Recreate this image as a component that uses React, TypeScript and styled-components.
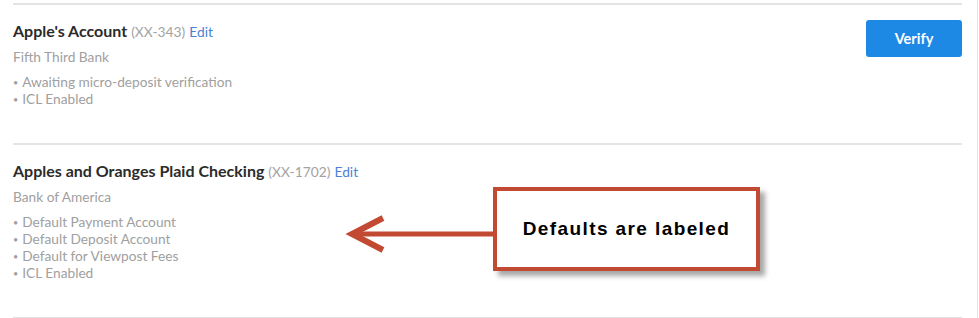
import styled, { createGlobalStyle } from 'styled-components'

const GlobalStyle = createGlobalStyle`
  html, body {
    margin: 0;
    padding: 0;
    background: #ffffff;
  }
  body {
    font-family: Lato, 'Open Sans', Arial, sans-serif;
  }
`

const Frame = styled.div`
  width: 978px;
  height: 318px;
  box-sizing: border-box;
  border-right: 1px solid #e4e4e4;
  padding: 3px 0 0 13px;
  overflow: hidden;
`

const AccountList = styled.div`
  width: 949px;
  border-bottom: 1px solid #e2e2e2;
`

const AccountRow = styled.section`
  position: relative;
  display: flex;
  justify-content: space-between;
  align-items: flex-start;
  border-top: 2px solid #e4e4e4;
  padding: 16px 0 36px;
`

const AccountInfo = styled.div`
  display: flex;
  flex-direction: column;
`

const Title = styled.h3`
  margin: 0;
  font-size: 16px;
  font-weight: 700;
  color: #2b2b2b;
  line-height: 20px;

  span {
    font-weight: 400;
    font-size: 13.8px;
    color: #a3a3a3;
    margin-left: 4px;
  }

  a {
    font-weight: 400;
    font-size: 13.8px;
    color: #4a82d6;
    margin-left: 4px;
    text-decoration: none;
  }
`

const BankName = styled.div`
  margin-top: 7px;
  font-size: 13.7px;
  color: #a0a0a0;
  line-height: 16px;
`

const Notes = styled.ul`
  list-style: none;
  margin: 8px 0 0;
  padding: 0;

  li {
    font-size: 13.7px;
    color: #a0a0a0;
    line-height: 17px;
    height: 17px;

    &::before {
      content: '•';
      display: inline-block;
      font-size: 9px;
      line-height: 0;
      margin-right: 4px;
      transform: translateY(-1px);
    }
  }
`

const VerifyButton = styled.button`
  width: 96px;
  height: 37px;
  margin-top: -1px;
  border: none;
  border-radius: 3px;
  background: #1e88e5;
  color: #ffffff;
  font-family: Lato, Arial, sans-serif;
  font-weight: 700;
  font-size: 14.5px;
  cursor: pointer;
`

const Annotation = styled.div`
  position: absolute;
  left: 332px;
  top: 42px;
  display: flex;
  align-items: flex-start;

  svg {
    margin-top: 27px;
  }
`

const Callout = styled.div`
  width: 259px;
  height: 76px;
  border: 4px solid #c24a33;
  background: #ffffff;
  box-shadow: 5px 5px 5px rgba(0, 0, 0, 0.35);
  display: flex;
  align-items: center;
  justify-content: center;
  font-family: 'Liberation Sans', Arial, sans-serif;
  font-weight: 700;
  font-size: 19px;
  letter-spacing: 1.4px;
  color: #000000;
`

type Account = {
  name: string
  mask: string
  bank: string
  notes: string[]
  verify?: boolean
}

const accounts: Account[] = [
  {
    name: "Apple's Account",
    mask: 'XX-343',
    bank: 'Fifth Third Bank',
    notes: ['Awaiting micro-deposit verification', 'ICL Enabled'],
    verify: true,
  },
  {
    name: 'Apples and Oranges Plaid Checking',
    mask: 'XX-1702',
    bank: 'Bank of America',
    notes: ['Default Payment Account', 'Default Deposit Account', 'Default for Viewpost Fees', 'ICL Enabled'],
  },
]

const Arrow = () => (
  <svg width="148" height="40" viewBox="0 0 148 40">
    <line x1="6" y1="20" x2="148" y2="20" stroke="#c24a33" strokeWidth="5" />
    <polyline points="38,4 7,20 38,36" fill="none" stroke="#c24a33" strokeWidth="6" />
  </svg>
)

export default function App() {
  return (
    <>
      <GlobalStyle />
      <Frame>
        <AccountList>
          {accounts.map((acct, i) => (
            <AccountRow key={acct.mask}>
              <AccountInfo>
                <Title>
                  {acct.name}
                  <span>({acct.mask})</span>
                  <a href="#">Edit</a>
                </Title>
                <BankName>{acct.bank}</BankName>
                <Notes>
                  {acct.notes.map((n) => (
                    <li key={n}>{n}</li>
                  ))}
                </Notes>
              </AccountInfo>
              {acct.verify && <VerifyButton>Verify</VerifyButton>}
              {i === 1 && (
                <Annotation>
                  <Arrow />
                  <Callout>Defaults are labeled</Callout>
                </Annotation>
              )}
            </AccountRow>
          ))}
        </AccountList>
      </Frame>
    </>
  )
}
